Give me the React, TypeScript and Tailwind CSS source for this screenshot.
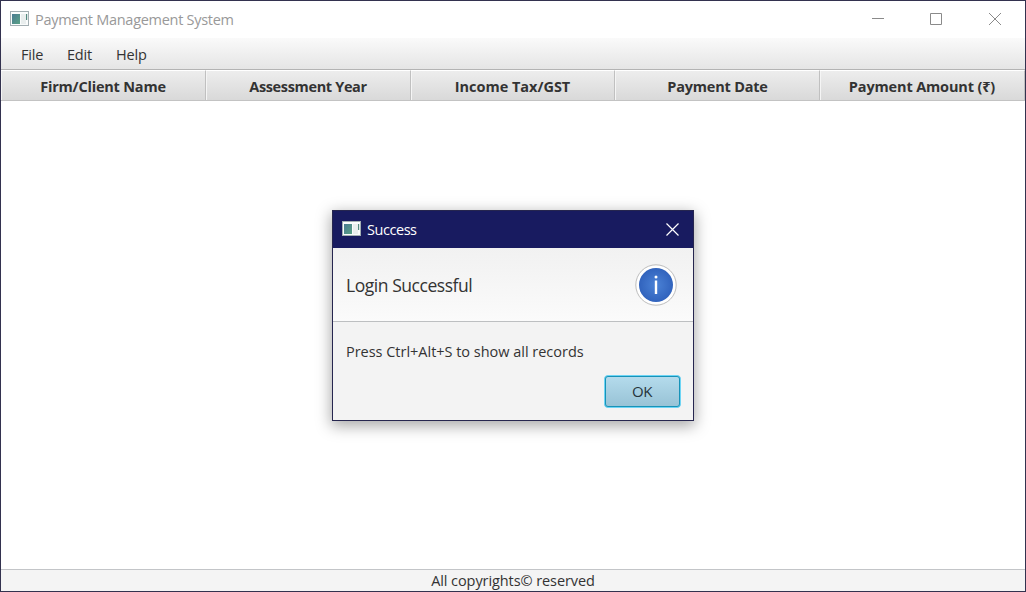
import React from "react";

const columns: { label: string; className: string }[] = [
  { label: "Firm/Client Name", className: "w-[205px] tracking-[-0.2px]" },
  { label: "Assessment Year", className: "w-[205px] tracking-[-0.35px]" },
  { label: "Income Tax/GST", className: "w-[204px] tracking-[-0.02px]" },
  { label: "Payment Date", className: "w-[205px] pl-px tracking-[-0.2px]" },
  { label: "Payment Amount (₹)", className: "w-[205px] tracking-[-0.15px]" },
];

function AppIcon({ className }: { className?: string }) {
  return (
    <svg width="20" height="16" viewBox="0 0 20 16" className={className} aria-hidden="true">
      <defs>
        <linearGradient id="pane" x1="0" y1="0" x2="1" y2="1">
          <stop offset="0" stopColor="#4a7b92" />
          <stop offset="1" stopColor="#5aa286" />
        </linearGradient>
      </defs>
      <rect x="0.5" y="0.5" width="18" height="14" fill="#fafcfc" stroke="#a3afb3" />
      <rect x="2" y="3" width="8" height="10" fill="url(#pane)" />
      <rect x="11" y="3" width="5" height="10" fill="#e9eeee" />
      <rect x="16" y="3" width="1.2" height="6" fill="#548a80" />
    </svg>
  );
}

function TitleBar() {
  return (
    <header className="flex h-[37px] shrink-0 items-center bg-white pl-[9px]">
      <AppIcon className="-mt-px" />
      <span className="ml-[5px] text-[14.5px] leading-5 tracking-[-0.28px] text-[#999]">
        Payment Management System
      </span>
      <svg width="130" height="14" viewBox="0 0 130 14" className="-mt-[2px] mr-[24px] ml-auto" fill="none" stroke="#8a8a8a" aria-hidden="true">
        <path d="M1 6.5H13M59.5 1.5H70.5V12.5H59.5ZM118 1L130 13M130 1L118 13" />
      </svg>
    </header>
  );
}

function Dialog() {
  return (
    <section
      role="dialog"
      className="absolute top-[209px] left-[331px] flex h-[211px] w-[362px] flex-col border border-[#26264f] bg-[#f3f3f3] shadow-[0_4px_14px_1px_rgba(0,0,0,0.34)]"
    >
      <div className="flex h-[37px] shrink-0 items-center bg-[#181b60] pl-[9px] text-white">
        <AppIcon className="-mt-px" />
        <span className="ml-[5px] text-[14.5px] leading-5 tracking-[-0.45px]">Success</span>
        <svg width="13" height="13" viewBox="0 0 13 13" className="-mt-px mr-[14px] ml-auto" stroke="white" strokeWidth="1.2" aria-hidden="true">
          <path d="M0.5 0.5L12.5 12.5M12.5 0.5L0.5 12.5" />
        </svg>
      </div>
      <div className="flex h-[74px] shrink-0 items-center justify-between border-b border-[#bdbfc1] bg-linear-to-b from-[#f1f1f1] to-[#fbfbfb] pr-[16px] pl-[13px]">
        <span className="pt-px text-[17.5px] tracking-[-0.45px]">Login Successful</span>
        <svg width="42" height="42" viewBox="0 0 42 42" aria-hidden="true">
          <defs>
            <radialGradient id="info">
              <stop offset="0" stopColor="#4b82d6" />
              <stop offset="1" stopColor="#3163bd" />
            </radialGradient>
          </defs>
          <circle cx="21" cy="21" r="20.2" fill="white" stroke="#b5b5b5" strokeWidth="0.9" />
          <circle cx="21" cy="21" r="17" fill="url(#info)" />
          <circle cx="21" cy="13" r="1.5" fill="white" />
          <rect x="19.8" y="16.5" width="2.4" height="13.5" fill="white" />
        </svg>
      </div>
      <p className="mt-[20px] pl-[13px] text-[14.5px] leading-5 tracking-[-0.02px]">
        Press Ctrl+Alt+S to show all records
      </p>
      <button className="mt-[13px] mr-[12px] flex h-[33px] w-[77px] items-center justify-center self-end rounded-[4px] border border-[#6ed5f5] bg-[#1793b8] p-px text-[15px] tracking-[-0.5px] text-[#26343b]">
        <span className="flex h-full w-full items-center justify-center rounded-[2px] bg-linear-to-b from-[#b4dbec] to-[#98c3d6] pr-px">
          OK
        </span>
      </button>
    </section>
  );
}

export default function App() {
  return (
    <div className="relative flex h-[592px] w-[1026px] flex-col overflow-hidden border border-[#33324f] bg-white font-['Open_Sans','Noto_Sans',sans-serif] text-[#333]">
      <TitleBar />
      <nav className="flex h-[32px] shrink-0 items-center border-b border-[#b3b3b3] bg-linear-to-b from-[#fafafa] to-[#e5e5e5] pt-[2px] pl-[20px] text-[14.5px] tracking-[-0.2px]">
        <span className="w-[46px]">File</span>
        <span className="w-[49px]">Edit</span>
        <span>Help</span>
      </nav>
      <div className="flex h-[31px] shrink-0 border-b border-[#c3c3c3] text-[14.5px] font-bold">
        {columns.map((c) => (
          <div
            key={c.label}
            className={`flex shrink-0 items-center justify-center border-t border-r border-t-white border-r-[#c0c0c0] bg-linear-to-b from-[#ededed] to-[#d9d9d9] pt-[2px] whitespace-nowrap shadow-[inset_1px_0_0_#f5f5f5] ${c.className}`}
          >
            {c.label}
          </div>
        ))}
      </div>
      <main className="flex-1 bg-white" />
      <footer className="flex h-[22px] shrink-0 items-center justify-center border-t border-[#c3c5c8] bg-[#f4f4f4] text-[14.5px] tracking-[-0.08px]">
        All copyrights© reserved
      </footer>
      <Dialog />
    </div>
  );
}
